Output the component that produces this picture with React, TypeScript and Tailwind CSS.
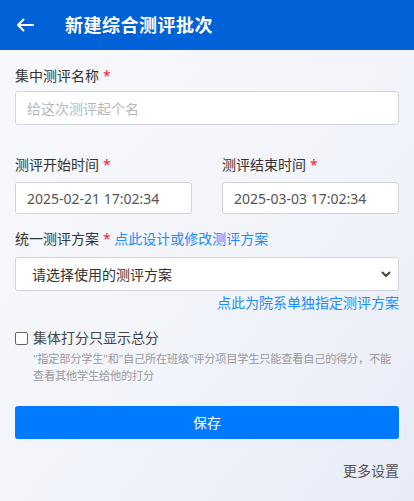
import React from 'react';

const Star = () => <span className="ml-1 text-[#f5222d]">*</span>;

const App: React.FC = () => {
  return (
    <div
      className="min-h-[501px] bg-gradient-to-br from-[#f8f9fc] via-[#f3f5fb] to-[#e8ecf7] text-[#333]"
      style={{ fontFamily: '"Noto Sans", "Noto Sans CJK SC", sans-serif' }}
    >
      <header className="h-[50px] bg-[#0062d6] flex items-center text-white">
        <div className="w-[65px] pl-[16px] flex items-center">
          <svg width="18" height="14" viewBox="0 0 18 14" fill="none" stroke="currentColor" strokeWidth="2" strokeLinecap="round" strokeLinejoin="round">
            <path d="M17 7H2M7.5 1.5L2 7l5.5 5.5" />
          </svg>
        </div>
        <h1 className="text-[18px] font-bold tracking-[0.5px]">新建综合测评批次</h1>
      </header>

      <main className="px-[15px] pt-[16px]">
        <label className="block text-[14px] leading-[20px] mb-[5px]">
          集中测评名称<Star />
        </label>
        <input
          placeholder="给这次测评起个名"
          className="w-full h-[34px] bg-white border border-[#d0d3d9] rounded-[3px] px-[11px] text-[14px] placeholder:text-[#b8b8b8] outline-none"
        />

        <div className="grid grid-cols-2 gap-[30px] mt-[30px]">
          <div>
            <label className="block text-[14px] leading-[20px] mb-[7px]">
              测评开始时间<Star />
            </label>
            <div className="h-[32px] bg-white border border-[#d0d3d9] rounded-[3px] px-[11px] flex items-center text-[14px] text-[#555]">
              2025-02-21 17:02:34
            </div>
          </div>
          <div>
            <label className="block text-[14px] leading-[20px] mb-[7px]">
              测评结束时间<Star />
            </label>
            <div className="h-[32px] bg-white border border-[#d0d3d9] rounded-[3px] px-[11px] flex items-center text-[14px] text-[#555]">
              2025-03-03 17:02:34
            </div>
          </div>
        </div>

        <div className="mt-[15px] text-[14px] leading-[20px] mb-[8px]">
          统一测评方案<Star /> <span className="text-[#1a8cff]">点此设计或修改测评方案</span>
        </div>
        <div className="h-[34px] bg-white border border-[#d0d3d9] rounded-[3px] pl-[16px] pr-[6px] flex items-center justify-between text-[14px] text-[#333]">
          <span>请选择使用的测评方案</span>
          <svg width="12" height="12" viewBox="0 0 12 12" fill="none" stroke="#444" strokeWidth="2" strokeLinecap="round" strokeLinejoin="round">
            <path d="M2.5 4.5L6 8l3.5-3.5" />
          </svg>
        </div>
        <div className="text-right text-[14px] leading-[20px] text-[#1a8cff] mt-[2px]">点此为院系单独指定测评方案</div>

        <label className="flex items-center mt-[15px] text-[14px] leading-[20px] text-[#444]">
          <span className="w-[13px] h-[13px] border border-[#666] rounded-[2px] bg-white mr-[5px]" />
          集体打分只显示总分
        </label>
        <p className="pl-[18px] mt-[2px] text-[11.2px] tracking-[-0.2px] leading-[17px] text-[#999]">
          "指定部分学生"和"自己所在班级"评分项目学生只能查看自己的得分，不能查看其他学生给他的打分
        </p>

        <button className="mt-[22px] w-full h-[33px] bg-[#007bff] rounded-[3px] text-white text-[14px]">保存</button>

        <div className="text-right mt-[22px] text-[14px] leading-[20px] text-[#555]">更多设置</div>
      </main>
    </div>
  );
};

export default App;
